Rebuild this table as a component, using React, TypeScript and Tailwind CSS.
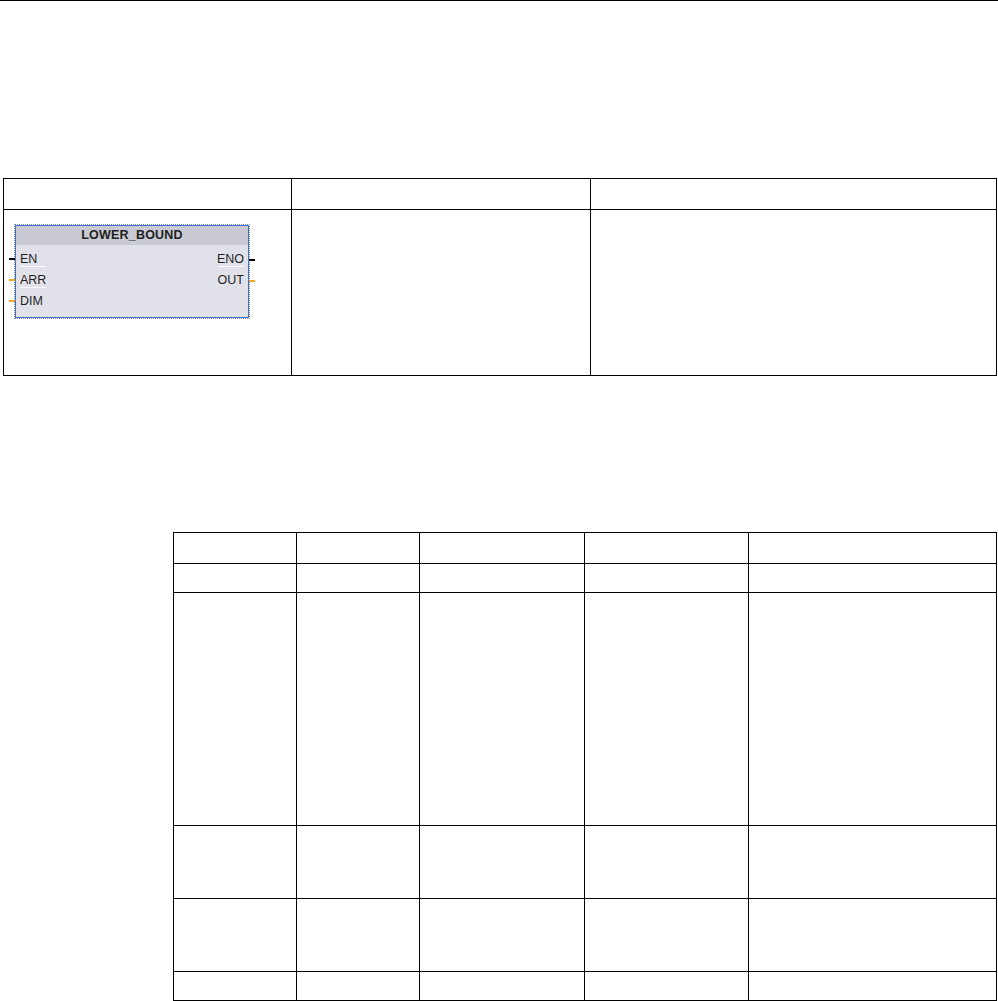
import React from 'react';

const leftPins = [
  { name: 'EN', wire: 'bg-black', line: true },
  { name: 'ARR', wire: 'bg-[#f5a623]', line: true },
  { name: 'DIM', wire: 'bg-[#f5a623]', line: false },
];

const rightPins = [
  { name: 'ENO', wire: 'bg-black', line: true },
  { name: 'OUT', wire: 'bg-[#f5a623]', line: false },
];

const FunctionBlock = () => {
  return (
    <div className="relative ml-[11px] mt-[15px] w-[234px] h-[93px] border border-[#3f6fcc] outline outline-1 outline-dotted outline-[#8a8f9c] bg-[#e1e2e9] font-['Liberation_Sans',Arial,sans-serif] text-[#1f1f1f]">
      <div className="h-[19px] bg-[#c9cad4] flex items-center justify-center text-[12.5px] font-bold leading-none tracking-[0.2px]">
        LOWER_BOUND
      </div>
      <div className="flex justify-between pt-[4px]">
        <div className="flex flex-col">
          {leftPins.map((p) => (
            <div key={p.name} className="relative h-[21px] flex items-center pl-[4px] text-[12.5px] leading-none">
              <span className={'absolute left-[-7px] top-[9px] w-[6px] h-[2px] ' + p.wire} />
              <span className="relative">
                {p.name}
                {p.line && <span className="absolute left-0 top-[13px] w-[26px] h-[1px] bg-white" />}
              </span>
            </div>
          ))}
        </div>
        <div className="flex flex-col items-end">
          {rightPins.map((p) => (
            <div key={p.name} className="relative h-[21px] flex items-center pr-[4px] text-[12.5px] leading-none">
              <span className={'absolute right-[-7px] top-[10px] w-[6px] h-[2px] ' + p.wire} />
              <span className="relative">
                {p.name}
                {p.line && <span className="absolute right-0 top-[13px] w-[26px] h-[1px] bg-white" />}
              </span>
            </div>
          ))}
        </div>
      </div>
    </div>
  );
};

const cell = 'border-r border-b border-black';

export default function App() {
  const rows2 = [31, 29, 233, 73, 73, 29];

  return (
    <div className="min-h-[1001px] bg-white border-t border-black">
      {/* first table */}
      <div className="mt-[177px] ml-[3px] w-fit grid grid-cols-[288px_299px_406px] grid-rows-[31px_166px] border-l border-t border-black">
        <div className={cell} />
        <div className={cell} />
        <div className={cell} />
        <div className={cell}>
          <FunctionBlock />
        </div>
        <div className={cell} />
        <div className={cell} />
      </div>

      {/* second table */}
      <div className="mt-[156px] ml-[173px] w-fit grid grid-cols-[123px_123px_165px_164px_248px] border-l border-t border-black">
        {rows2.map((h, i) => (
          <React.Fragment key={i}>
            {[0, 1, 2, 3, 4].map((c) => (
              <div key={c} className={cell} style={{ height: h }} />
            ))}
          </React.Fragment>
        ))}
      </div>
    </div>
  );
}
